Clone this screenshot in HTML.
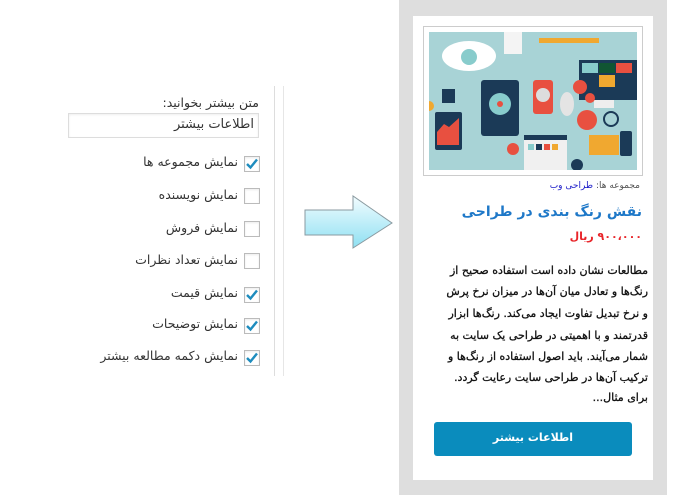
<!DOCTYPE html>
<html><head><meta charset="utf-8"><style>
body{margin:0;width:700px;height:500px;background:#fff;position:relative;overflow:hidden;font-family:"DejaVu Sans","Liberation Sans",sans-serif;}
.a{position:absolute;white-space:nowrap;direction:rtl;}
.lbl{font-size:12.5px;color:#333;}
.cb{position:absolute;left:244px;width:14px;height:14px;border:1px solid #bbb;background:#fff;box-shadow:inset 0 1px 2px rgba(0,0,0,.08);}
.cb svg{position:absolute;left:0;top:0}
.ln{position:absolute;right:52px;font-size:11px;color:#111;direction:rtl;white-space:nowrap;text-align:right;-webkit-text-stroke:0.3px #111;}
</style></head><body>
<div class="a lbl" style="right:441px;top:95px;">متن بیشتر بخوانید:</div>
<div style="position:absolute;left:68px;top:113px;width:189px;height:23px;border:1px solid #ddd;box-shadow:inset 0 1px 2px rgba(0,0,0,.07);"></div>
<div class="a" style="right:446px;top:117px;font-size:13px;color:#333;">اطلاعات بیشتر</div>

<div class="cb" style="top:156px"><svg width="14" height="14"><path d="M2 7 L5.5 10.5 L12 2.5" stroke="#1e8cbe" stroke-width="2.4" fill="none"/></svg></div>
<div class="a lbl" style="right:462px;top:154px;">نمایش مجموعه ها</div>
<div class="cb" style="top:188px"></div>
<div class="a lbl" style="right:462px;top:187px;">نمایش نویسنده</div>
<div class="cb" style="top:221px"></div>
<div class="a lbl" style="right:462px;top:220px;">نمایش فروش</div>
<div class="cb" style="top:253px"></div>
<div class="a lbl" style="right:462px;top:252px;">نمایش تعداد نظرات</div>
<div class="cb" style="top:287px"><svg width="14" height="14"><path d="M2 7 L5.5 10.5 L12 2.5" stroke="#1e8cbe" stroke-width="2.4" fill="none"/></svg></div>
<div class="a lbl" style="right:462px;top:285px;">نمایش قیمت</div>
<div class="cb" style="top:318px"><svg width="14" height="14"><path d="M2 7 L5.5 10.5 L12 2.5" stroke="#1e8cbe" stroke-width="2.4" fill="none"/></svg></div>
<div class="a lbl" style="right:462px;top:316px;">نمایش توضیحات</div>
<div class="cb" style="top:350px"><svg width="14" height="14"><path d="M2 7 L5.5 10.5 L12 2.5" stroke="#1e8cbe" stroke-width="2.4" fill="none"/></svg></div>
<div class="a lbl" style="right:462px;top:348px;">نمایش دکمه مطالعه بیشتر</div>

<div style="position:absolute;left:274px;top:86px;width:1px;height:290px;background:#ddd"></div>
<div style="position:absolute;left:283px;top:86px;width:1px;height:290px;background:#e6e6e6"></div>

<svg style="position:absolute;left:303px;top:194px" width="92" height="56">
<defs><linearGradient id="g" x1="0" y1="0" x2="0" y2="1"><stop offset="0" stop-color="#f2fcff"/><stop offset="1" stop-color="#8ee0f2"/></linearGradient></defs>
<path d="M2 16 H50 V2 L89 29 L50 54 V41 H2 Z" fill="url(#g)" stroke="#8a9aa0" stroke-width="1"/>
</svg>

<div style="position:absolute;left:399px;top:0;width:268px;height:495px;background:#dedede"></div>
<div style="position:absolute;left:413px;top:16px;width:240px;height:464px;background:#fff"></div>
<div style="position:absolute;left:423px;top:26px;width:218px;height:148px;border:1px solid #ccc;background:#fff"></div>
<svg style="position:absolute;left:429px;top:32px" width="208" height="138">
<rect width="208" height="138" fill="#a8d3d6"/>
<ellipse cx="40" cy="24" rx="27" ry="15" fill="#fff"/><circle cx="40" cy="25" r="8" fill="#8cc"/>
<rect x="75" y="0" width="18" height="22" fill="#f4f4f4"/>
<rect x="110" y="6" width="60" height="5" fill="#f0a830"/>
<rect x="150" y="28" width="58" height="40" fill="#1b3a57"/><rect x="153" y="31" width="16" height="10" fill="#8cc"/><rect x="170" y="31" width="16" height="10" fill="#153"/><rect x="187" y="31" width="16" height="10" fill="#e85040"/><rect x="170" y="43" width="16" height="12" fill="#f0a830"/>
<rect x="165" y="68" width="20" height="8" fill="#eee"/>
<rect x="52" y="48" width="38" height="56" rx="3" fill="#1b3a57"/><circle cx="71" cy="72" r="11" fill="#8cc"/><circle cx="71" cy="72" r="3" fill="#e85040"/>
<rect x="104" y="48" width="20" height="34" rx="3" fill="#e85040"/><circle cx="114" cy="63" r="7" fill="#ddd"/>
<circle cx="151" cy="55" r="7" fill="#e85040"/><circle cx="161" cy="66" r="5" fill="#e85040"/>
<rect x="13" y="57" width="13" height="14" fill="#1b3a57"/>
<rect x="6" y="80" width="27" height="38" rx="2" fill="#1b3a57"/><path d="M8 100 L15 92 L20 95 L30 86 V113 H8Z" fill="#e85040"/>
<ellipse cx="138" cy="72" rx="7" ry="12" fill="#e4e4e4"/>
<circle cx="158" cy="88" r="10" fill="#e85040"/>
<circle cx="182" cy="87" r="7" fill="none" stroke="#1b3a57" stroke-width="2"/>
<rect x="95" y="103" width="43" height="35" fill="#f0f0f0"/><rect x="95" y="103" width="43" height="5" fill="#1b3a57"/><rect x="99" y="112" width="6" height="6" fill="#8cc"/><rect x="107" y="112" width="6" height="6" fill="#1b3a57"/><rect x="115" y="112" width="6" height="6" fill="#e85040"/><rect x="123" y="112" width="6" height="6" fill="#f0a830"/>
<rect x="160" y="103" width="30" height="20" fill="#f0a830"/>
<rect x="191" y="99" width="12" height="25" rx="2" fill="#1b3a57"/>
<circle cx="84" cy="117" r="6" fill="#e85040"/><circle cx="148" cy="133" r="6" fill="#1b3a57"/><circle cx="0" cy="74" r="5" fill="#f0a830"/>
</svg>

<div class="a" style="right:60px;top:181px;font-size:9px;color:#555;">مجموعه ها: <span style="color:#1a1ac8">طراحی وب</span></div>
<div class="a" style="right:58px;top:204px;font-size:14px;font-weight:bold;color:#1e78c8;">نقش رنگ بندی در طراحی</div>
<div class="a" style="right:58px;top:230px;font-size:11px;font-weight:bold;color:#e8252a;">۹۰۰،۰۰۰ ریال</div>

<div class="ln" style="top:264px">مطالعات نشان داده است استفاده صحیح از</div>
<div class="ln" style="top:285px">رنگ‌ها و تعادل میان آن‌ها در میزان نرخ پرش</div>
<div class="ln" style="top:307px">و نرخ تبدیل تفاوت ایجاد می‌کند. رنگ‌ها ابزار</div>
<div class="ln" style="top:329px">قدرتمند و با اهمیتی در طراحی یک سایت به</div>
<div class="ln" style="top:350px">شمار می‌آیند. باید اصول استفاده از رنگ‌ها و</div>
<div class="ln" style="top:371px">ترکیب آن‌ها در طراحی سایت رعایت گردد.</div>
<div class="ln" style="top:391px">برای مثال...</div>

<div style="position:absolute;left:434px;top:422px;width:198px;height:34px;border-radius:3px;background:#0a8cbd;"></div>
<div class="a" style="left:434px;width:198px;top:431px;text-align:center;font-size:11px;font-weight:bold;color:#fff;">اطلاعات بیشتر</div>
</body></html>
